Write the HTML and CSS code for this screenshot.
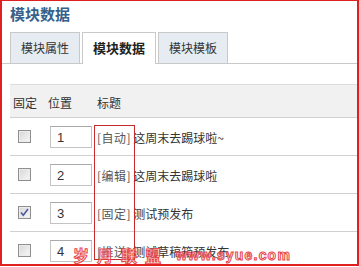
FILE: index.html
```html
<!DOCTYPE html>
<html lang="zh-CN">
<head>
  <meta charset="UTF-8">
  <title>模块数据</title>
  <link rel="stylesheet" href="styles.css">
</head>
<body>

  <div class="frame">
    <div class="title">模块数据</div>

    <div class="tabs">
      <div class="tab">模块属性</div>
      <div class="tab active">模块数据</div>
      <div class="tab">模块模板</div>
    </div>

    <div class="grid">
      <div class="row head">
        <div class="c1">固定</div>
        <div class="c2">位置</div>
        <div class="c3">标题</div>
      </div>
      <div class="row">
        <div class="c1"><span class="cb"></span></div>
        <div class="c2"><span class="num">1</span></div>
        <div class="c3"><span class="tag">[自动]</span>这周末去踢球啦~</div>
      </div>
      <div class="row">
        <div class="c1"><span class="cb"></span></div>
        <div class="c2"><span class="num">2</span></div>
        <div class="c3"><span class="tag">[编辑]</span>这周末去踢球啦</div>
      </div>
      <div class="row">
        <div class="c1">
          <span class="cb">
            <svg width="11" height="11" viewBox="0 0 11 11"><path d="M2 5.5 L4.3 8.3 L9 2" fill="none" stroke="#4a5aa0" stroke-width="1.6"/></svg>
          </span>
        </div>
        <div class="c2"><span class="num">3</span></div>
        <div class="c3"><span class="tag">[固定]</span>测试预发布</div>
      </div>
      <div class="row">
        <div class="c1"><span class="cb"></span></div>
        <div class="c2"><span class="num">4</span></div>
        <div class="c3"><span class="tag">[推送]</span>测试草稿箱预发布</div>
      </div>
    </div>

    <!-- red mark over the tag column -->
    <div class="mark"></div>

    <div class="wm wm-cn">岁月联盟</div>
    <div class="wm wm-en">www.syue.com</div>
  </div>

</body>
</html>
```

FILE: styles.css
```css
body {
  margin: 0;
  background: #fff;
  font-family: "Noto Sans CJK SC", "Liberation Sans", sans-serif;
  font-size: 12px;
  color: #333;
}
.frame {
  width: 359px;
  height: 266px;
  box-sizing: border-box;
  border: 2px solid #e02020;
  border-top-width: 1px;
  position: relative;
  overflow: hidden;
}
.title {
  padding: 3px 0 0 8px;
  font-size: 15px;
  line-height: 20px;
  font-weight: bold;
  color: #36618c;
}
.tabs {
  display: flex;
  gap: 2px;
  margin-top: 8px;
  padding-left: 8px;
  border-bottom: 1px solid #c9c9c9;
  height: 31px;
}
.tab {
  height: 30px;
  line-height: 30px;
  padding: 0 10px;
  border: 1px solid #c9c9c9;
  border-bottom: none;
  background: #e6ecf2;
  color: #333;
}
.tab.active {
  background: #fff;
  height: 31px;
  font-size: 13px;
  font-weight: bold;
  color: #222;
}
.grid {
  margin: 20px 0 0 8px;
}
.row {
  display: grid;
  grid-template-columns: 35px 49px 1fr;
  height: 37px;
  align-items: center;
  border-bottom: 1px solid #d0d0d0;
}
.row.head {
  height: 32px;
  border-top: 1px solid #dcdcdc;
  background: #f1f1f1;
  align-items: start;
}
.head div {
  padding: 4px 0 0 3px;
  line-height: 28px;
  font-size: 12px;
}
.row .c1 {
  padding-left: 8px;
  display: flex;
}
.row.head .c1 {
  padding-left: 3px;
}
.cb {
  width: 11px;
  height: 11px;
  border: 1px solid #8f8f8f;
  background: linear-gradient(135deg, #d6d6d6, #f8f8f8);
  box-shadow: inset 0 0 0 1px #ececec;
  display: flex;
}
.c2 {
  padding-left: 5px;
}
.num {
  display: block;
  width: 34px;
  height: 20px;
  padding-left: 6px;
  border: 1px solid #c4c4c4;
  border-top-color: #a9a9a9;
  font-family: "Liberation Sans", sans-serif;
  font-size: 13px;
  line-height: 21px;
  color: #333;
}
.c3 {
  padding: 2px 0 0 3px;
  white-space: nowrap;
}
.tag {
  color: #555;
  letter-spacing: 0.5px;
  margin-right: 2px;
}
.mark {
  position: absolute;
  left: 92px;
  top: 124px;
  width: 41px;
  height: 135px;
  box-sizing: border-box;
  border: 1px solid #c62a2a;
}
.wm {
  position: absolute;
  font-weight: bold;
  color: rgba(255, 236, 236, 0.55);
  -webkit-text-stroke: 1px #e8484a;
  white-space: nowrap;
}
.wm-cn {
  left: 71px;
  top: 244px;
  font-size: 16px;
  letter-spacing: 8px;
  line-height: 20px;
}
.wm-en {
  left: 174px;
  top: 246px;
  font-family: "Liberation Sans", sans-serif;
  font-size: 14px;
  letter-spacing: 1.2px;
  line-height: 17px;
}
```
